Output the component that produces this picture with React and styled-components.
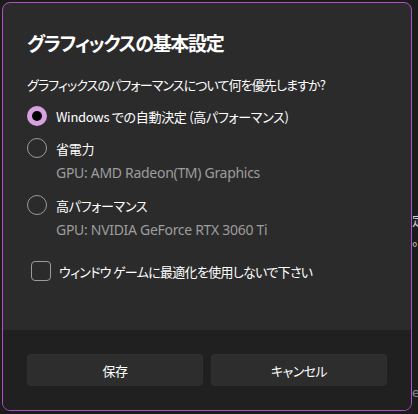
import React from "react";
import styled, { createGlobalStyle } from "styled-components";

const Global = createGlobalStyle`
  html, body { margin: 0; padding: 0; background: #1b1b1b; }
  body {
    font-family: "Noto Sans CJK JP", "Noto Sans", sans-serif;
    color: #fff;
    font-feature-settings: "palt";
  }
  * { box-sizing: border-box; }
`;

const Page = styled.div`
  position: relative;
  width: 418px;
  height: 414px;
  padding: 2px;
  overflow: hidden;
  background: #1b1b1b;
`;

const BackText = styled.span`
  position: absolute;
  left: 412px;
  top: ${(p) => p.$top}px;
  font-size: 13px;
  line-height: 16px;
  color: ${(p) => p.$color || "#cfcfcf"};
`;

const Dialog = styled.div`
  position: relative;
  z-index: 1;
  width: 410px;
  height: 409px;
  border: 1px solid #b04fc9;
  border-radius: 8px;
  overflow: hidden;
  display: flex;
  flex-direction: column;
  background: #2b2b2b;
`;

const Content = styled.div`
  flex: 1;
  padding: 26px 24px 0 24px;
  display: flex;
  flex-direction: column;
`;

const Title = styled.h1`
  margin: 0;
  font-size: 19px;
  line-height: 28px;
  letter-spacing: -1.3px;
  font-weight: 700;
  color: #fff;
`;

const Question = styled.p`
  margin: 18px 0 0;
  font-size: 13px;
  line-height: 20px;
  letter-spacing: -0.9px;
  color: #fff;
  white-space: nowrap;
`;

const Options = styled.div`
  margin-top: 11px;
  display: flex;
  flex-direction: column;
  gap: 12px;
`;

const Row = styled.div`
  display: flex;
  align-items: center;
  gap: 9px;
  height: 20px;
  font-size: 13px;
  letter-spacing: -0.3px;
  color: #fff;
  white-space: pre;
`;

const RadioCircle = styled.span`
  width: 20px;
  height: 20px;
  border-radius: 50%;
  flex: none;
  display: flex;
  align-items: center;
  justify-content: center;
  border: ${(p) => (p.$checked ? "none" : "1px solid #9b9b9b")};
  background: ${(p) => (p.$checked ? "#d9a0e2" : "transparent")};
  &::after {
    content: "";
    display: ${(p) => (p.$checked ? "block" : "none")};
    width: 10px;
    height: 10px;
    border-radius: 50%;
    background: #000;
  }
`;

const SubText = styled.div`
  margin-top: 5px;
  padding-left: 29px;
  font-size: 14px;
  line-height: 20px;
  letter-spacing: -0.3px;
  color: #9d9d9d;
  font-family: "Noto Sans", "Noto Sans CJK JP", sans-serif;
`;

const CheckRow = styled.div`
  margin-top: 21px;
  padding-left: 4px;
  display: flex;
  align-items: center;
  gap: 8px;
  height: 20px;
  font-size: 13px;
  letter-spacing: -0.7px;
  color: #fff;
  white-space: pre;
`;

const CheckBox = styled.span`
  width: 20px;
  height: 20px;
  flex: none;
  border: 1px solid #9b9b9b;
  border-radius: 4px;
`;

const Footer = styled.div`
  height: 80px;
  flex: none;
  background: #202020;
  padding: 24px;
  display: grid;
  grid-template-columns: 1fr 1fr;
  gap: 8px;
`;

const Button = styled.button`
  height: 32px;
  border: 1px solid #303030;
  border-radius: 4px;
  background: #2d2d2d;
  color: #fff;
  font-family: "Noto Sans CJK JP", sans-serif;
  font-feature-settings: "palt";
  font-size: 13px;
  letter-spacing: -0.6px;
  padding: 0;
`;

function RadioOption({ checked, label, sub }) {
  return (
    <div>
      <Row>
        <RadioCircle $checked={checked} />
        <span>{label}</span>
      </Row>
      {sub && <SubText>{sub}</SubText>}
    </div>
  );
}

export default function App() {
  return (
    <>
      <Global />
      <Page>
        <BackText $top={212}>定</BackText>
        <BackText $top={232}>。</BackText>
        <BackText $top={384} $color="#8a8a8a">e</BackText>
        <Dialog>
          <Content>
            <Title>グラフィックスの基本設定</Title>
            <Question>グラフィックスのパフォーマンスについて何を優先しますか?</Question>
            <Options>
              <RadioOption checked label="Windows での自動決定 (高パフォーマンス)" />
              <RadioOption label="省電力" sub="GPU: AMD Radeon(TM) Graphics" />
              <RadioOption label="高パフォーマンス" sub="GPU: NVIDIA GeForce RTX 3060 Ti" />
            </Options>
            <CheckRow>
              <CheckBox />
              <span>ウィンドウ ゲームに最適化を使用しないで下さい</span>
            </CheckRow>
          </Content>
          <Footer>
            <Button>保存</Button>
            <Button>キャンセル</Button>
          </Footer>
        </Dialog>
      </Page>
    </>
  );
}
